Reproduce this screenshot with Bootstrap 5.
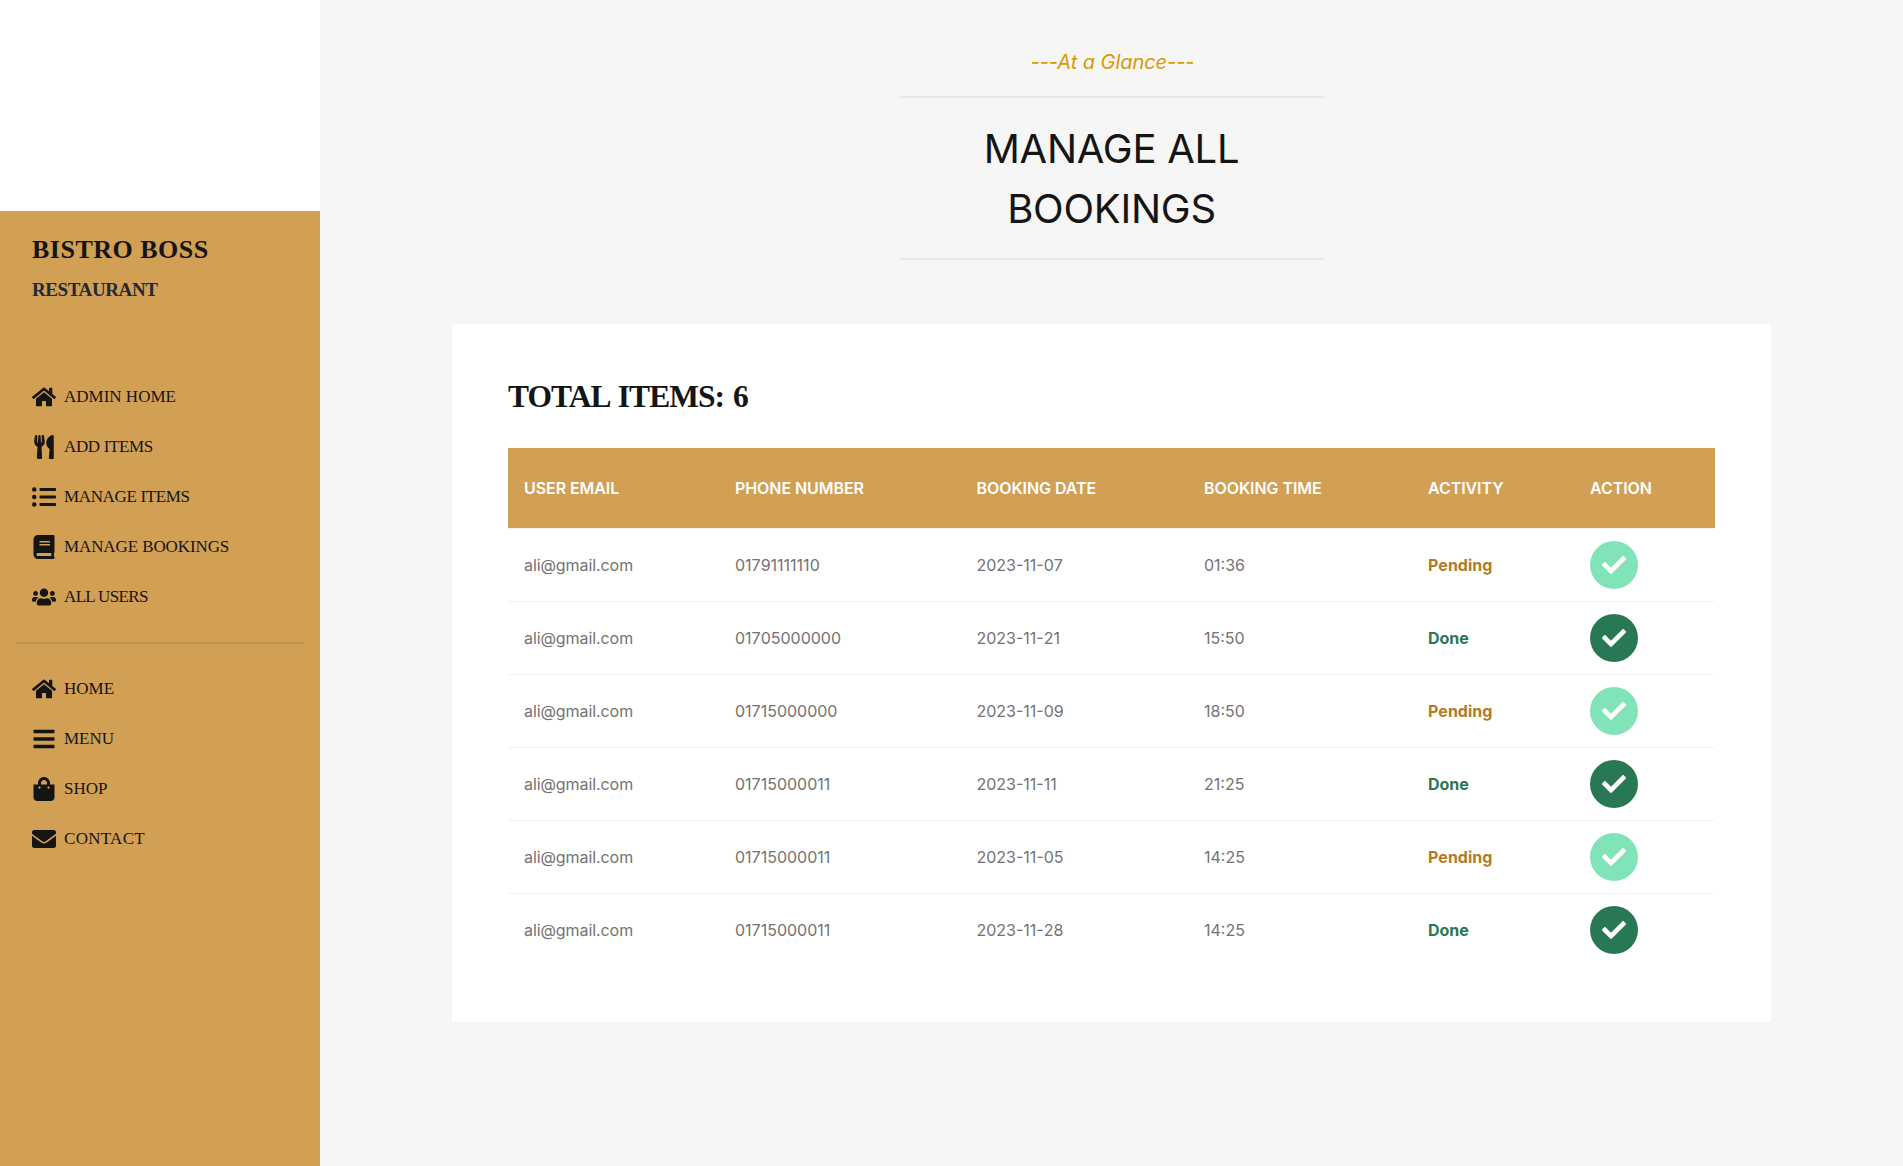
<!DOCTYPE html>
<html lang="en">
<head>
<meta charset="utf-8">
<meta name="viewport" content="width=device-width, initial-scale=1">
<title>Bistro Boss | Manage Bookings</title>
<link href="https://cdn.jsdelivr.net/npm/bootstrap@5.3.0/dist/css/bootstrap.min.css" rel="stylesheet">
<style>
body { font-family: Inter, "Noto Sans", sans-serif; color: #151515; line-height: 24px; }
.sidebar { width: 320px; padding-top: 211px; }
.side-panel { background: #d1a054; padding: 21px 16px 0; font-family: "Liberation Serif", serif; }
.brand-name { font-size: 26px; line-height: 36px; font-weight: 700; letter-spacing: .5px; }
.brand-sub { font-size: 19px; line-height: 28px; font-weight: 700; color: #1f2937; letter-spacing: -.4px; margin-top: 8px; }
.side-nav .nav-link { height: 50px; padding: 0 16px; color: #151515; font-size: 17px; }
.side-nav .nav-link svg { width: 24px; height: 24px; fill: currentColor; }
.side-nav.first { margin-top: 68px; }
.side-nav .loose { letter-spacing: .3px; }
.side-nav .snug { letter-spacing: -.1px; }
.side-nav .tight { letter-spacing: -.35px; }
.side-nav .tighter { letter-spacing: -.65px; }
.side-line { height: 2px; background: #be9352; margin: 20px 0; }
.main-area { background: #f6f6f6; }
.section-head { width: 424px; padding-top: 47px; }
.tagline { color: #d99904; font-size: 20px; line-height: 30px; font-style: italic; letter-spacing: -.06px; padding-left: 2px; margin-bottom: 19px; }
.main-title { font-size: 40px; line-height: 60px; font-weight: 400; letter-spacing: -.25px; border: solid #e5e7eb; border-width: 2px 0; padding: 21px 60px 19px; margin: 0; }
.panel { width: 1319px; margin-top: 64px; padding: 55px 56px 56px; }
.total { font-family: "Liberation Serif", serif; font-size: 31.5px; line-height: 36px; font-weight: 700; letter-spacing: -.95px; word-spacing: 2px; margin: 0 0 33px; }
.bookings { table-layout: fixed; border-collapse: separate; border-spacing: 0; color: #737373; margin: 0; --bs-table-bg: transparent; }
.bookings th, .bookings td { padding: 12px 16px; border-bottom: 1px solid #f2f2f2; vertical-align: middle; color: inherit; }
.bookings td { font-kerning: none; }
.bookings td:first-child { letter-spacing: -.08px; }
.bookings th { height: 81px; background: #d1a054; background-clip: padding-box; color: #fff; font-weight: 600; letter-spacing: -.07px; }
.bookings tbody tr:last-child td { border-bottom: 0; }
.bookings .status { font-weight: 700; }
.pending { color: #b07c2a; }
.finished { color: #287855; }
.round-btn { width: 48px; height: 48px; padding: 0; border: 0; background: #287855; }
.round-btn.open { background: #81e4b8; }
.round-btn svg { width: 24px; height: 24px; fill: #fff; }
</style>
</head>
<body>
<svg class="d-none" xmlns="http://www.w3.org/2000/svg">
<symbol id="i-home" viewBox="0 0 576 512"><path d="M280.37 148.26L96 300.11V464a16 16 0 0 0 16 16l112.06-.29a16 16 0 0 0 15.92-16V368a16 16 0 0 1 16-16h64a16 16 0 0 1 16 16v95.64a16 16 0 0 0 16 16.05L464 480a16 16 0 0 0 16-16V300L295.67 148.26a12.19 12.19 0 0 0-15.3 0zM571.6 251.47L488 182.56V44.05a12 12 0 0 0-12-12h-56a12 12 0 0 0-12 12v72.61L318.47 43a48 48 0 0 0-61 0L4.34 251.47a12 12 0 0 0-1.6 16.9l25.5 31A12 12 0 0 0 45.15 301l235.22-193.74a12.19 12.19 0 0 1 15.3 0L530.9 301a12 12 0 0 0 16.9-1.6l25.5-31a12 12 0 0 0-1.7-16.93z"/></symbol>
<symbol id="i-utensils" viewBox="0 0 416 512"><path d="M207.9 15.2c.8 4.7 16.1 94.5 16.1 128.8 0 52.3-27.8 89.6-68.9 104.6L168 486.7c.7 13.7-10.2 25.3-24 25.3H80c-13.7 0-24.7-11.5-24-25.3l12.9-238.1C27.7 233.6 0 196.2 0 144 0 109.6 15.3 19.9 16.1 15.2 19.3-5.1 61.4-5.4 64 16.3v141.2c1.3 3.4 15.1 3.2 16 0 1.4-25.3 7.9-139.2 8-141.8 3.3-20.8 44.7-20.8 47.9 0 .2 2.7 6.6 116.5 8 141.8.9 3.2 14.8 3.4 16 0V16.3c2.6-21.6 44.8-21.4 48-1.1zm119.2 285.7l-15 185.1c-1.2 14 9.9 26 23.9 26h56c13.3 0 24-10.7 24-24V24c0-13.2-10.7-24-24-24-82.5 0-221.4 178.5-64.9 300.9z"/></symbol>
<symbol id="i-list" viewBox="0 0 512 512"><path d="M48 48a48 48 0 1 0 48 48 48 48 0 0 0-48-48zm0 160a48 48 0 1 0 48 48 48 48 0 0 0-48-48zm0 160a48 48 0 1 0 48 48 48 48 0 0 0-48-48zm448 16H176a16 16 0 0 0-16 16v32a16 16 0 0 0 16 16h320a16 16 0 0 0 16-16v-32a16 16 0 0 0-16-16zm0-320H176a16 16 0 0 0-16 16v32a16 16 0 0 0 16 16h320a16 16 0 0 0 16-16V80a16 16 0 0 0-16-16zm0 160H176a16 16 0 0 0-16 16v32a16 16 0 0 0 16 16h320a16 16 0 0 0 16-16v-32a16 16 0 0 0-16-16z"/></symbol>
<symbol id="i-book" viewBox="0 0 448 512"><path d="M448 360V24c0-13.3-10.7-24-24-24H96C43 0 0 43 0 96v320c0 53 43 96 96 96h328c13.3 0 24-10.7 24-24v-16c0-7.5-3.5-14.3-8.9-18.7-4.2-15.4-4.2-59.3 0-74.7 5.4-4.3 8.9-11.1 8.9-18.6zM128 134c0-3.3 2.7-6 6-6h212c3.3 0 6 2.7 6 6v20c0 3.3-2.7 6-6 6H134c-3.3 0-6-2.7-6-6v-20zm0 64c0-3.3 2.7-6 6-6h212c3.3 0 6 2.7 6 6v20c0 3.3-2.7 6-6 6H134c-3.3 0-6-2.7-6-6v-20zm253.4 250H96c-17.7 0-32-14.3-32-32 0-17.6 14.4-32 32-32h285.4c-1.9 17.1-1.9 46.9 0 64z"/></symbol>
<symbol id="i-users" viewBox="0 0 640 512"><path d="M96 224c35.3 0 64-28.7 64-64s-28.7-64-64-64-64 28.7-64 64 28.7 64 64 64zm448 0c35.3 0 64-28.7 64-64s-28.7-64-64-64-64 28.7-64 64 28.7 64 64 64zm32 32h-64c-17.6 0-33.5 7.1-45.1 18.6 40.3 22.1 68.9 62 75.1 109.4h66c17.7 0 32-14.3 32-32v-32c0-35.3-28.7-64-64-64zm-256 0c61.9 0 112-50.1 112-112S381.9 32 320 32 208 82.1 208 144s50.1 112 112 112zm76.8 32h-8.3c-20.8 10-43.9 16-68.5 16s-47.6-6-68.5-16h-8.3C179.6 288 128 339.6 128 403.2V432c0 26.5 21.5 48 48 48h288c26.5 0 48-21.5 48-48v-28.8c0-63.6-51.6-115.2-115.2-115.2zm-223.7-13.4C161.5 263.1 145.6 256 128 256H64c-35.3 0-64 28.7-64 64v32c0 17.7 14.3 32 32 32h65.9c6.3-47.4 34.9-87.3 75.2-109.4z"/></symbol>
<symbol id="i-bars" viewBox="0 0 448 512"><rect y="60" width="448" height="72" rx="16"/><rect y="220" width="448" height="72" rx="16"/><rect y="380" width="448" height="72" rx="16"/></symbol>
<symbol id="i-bag" viewBox="0 0 448 512"><path d="M352 160v-32C352 57.42 294.579 0 224 0 153.42 0 96 57.42 96 128v32H0v272c0 44.183 35.817 80 80 80h288c44.183 0 80-35.817 80-80V160h-96zm-192-32c0-35.29 28.71-64 64-64s64 28.71 64 64v32H160v-32zm160 120c-13.255 0-24-10.745-24-24s10.745-24 24-24 24 10.745 24 24-10.745 24-24 24zm-192 0c-13.255 0-24-10.745-24-24s10.745-24 24-24 24 10.745 24 24-10.745 24-24 24z"/></symbol>
<symbol id="i-mail" viewBox="0 0 512 512"><path d="M502.3 190.8c3.9-3.1 9.7-.2 9.7 4.7V400c0 26.5-21.5 48-48 48H48c-26.5 0-48-21.5-48-48V195.6c0-5 5.7-7.8 9.7-4.7 22.4 17.4 52.1 39.5 154.1 113.6 21.1 15.4 56.7 47.8 92.2 47.6 35.7.3 72-32.8 92.3-47.6 102-74.1 131.6-96.3 154-113.7zM256 320c23.2.4 56.6-29.2 73.4-41.4 132.7-96.3 142.8-104.7 173.4-128.7 5.8-4.5 9.2-11.5 9.2-18.9v-19c0-26.5-21.5-48-48-48H48c-26.5 0-48 21.5-48 48v19c0 7.4 3.4 14.3 9.2 18.9 30.6 23.9 40.7 32.4 173.4 128.7 16.8 12.2 50.2 41.8 73.4 41.4z"/></symbol>
<symbol id="i-check" viewBox="0 0 512 512"><path d="M173.898 439.404l-166.4-166.4c-9.997-9.997-9.997-26.206 0-36.204l36.203-36.204c9.997-9.998 26.207-9.998 36.204 0L192 312.69 432.095 72.596c9.997-9.997 26.207-9.997 36.204 0l36.203 36.204c9.997 9.997 9.997 26.206 0 36.204l-294.4 294.401c-9.998 9.997-26.207 9.997-36.204-.001z"/></symbol>
</svg>
<div class="d-flex vh-100 overflow-hidden">
  <aside class="sidebar bg-white d-flex flex-column flex-shrink-0">
    <div class="side-panel flex-grow-1">
      <div class="px-3">
        <div class="brand-name">BISTRO BOSS</div>
        <div class="brand-sub">RESTAURANT</div>
      </div>
      <nav class="nav flex-column side-nav first">
        <a class="nav-link d-flex align-items-center gap-2" href="#"><svg><use href="#i-home"/></svg><span>ADMIN HOME</span></a>
        <a class="nav-link d-flex align-items-center gap-2" href="#"><svg><use href="#i-utensils"/></svg><span class="tight">ADD ITEMS</span></a>
        <a class="nav-link d-flex align-items-center gap-2" href="#"><svg><use href="#i-list"/></svg><span class="tight">MANAGE ITEMS</span></a>
        <a class="nav-link d-flex align-items-center gap-2" href="#"><svg><use href="#i-book"/></svg><span class="snug">MANAGE BOOKINGS</span></a>
        <a class="nav-link d-flex align-items-center gap-2" href="#"><svg><use href="#i-users"/></svg><span class="tighter">ALL USERS</span></a>
      </nav>
      <div class="side-line"></div>
      <nav class="nav flex-column side-nav">
        <a class="nav-link d-flex align-items-center gap-2" href="#"><svg><use href="#i-home"/></svg><span>HOME</span></a>
        <a class="nav-link d-flex align-items-center gap-2" href="#"><svg><use href="#i-bars"/></svg><span>MENU</span></a>
        <a class="nav-link d-flex align-items-center gap-2" href="#"><svg><use href="#i-bag"/></svg><span>SHOP</span></a>
        <a class="nav-link d-flex align-items-center gap-2" href="#"><svg><use href="#i-mail"/></svg><span class="loose">CONTACT</span></a>
      </nav>
    </div>
  </aside>
  <main class="main-area flex-grow-1">
    <header class="section-head mx-auto text-center">
      <p class="tagline">---At a Glance---</p>
      <h1 class="main-title">MANAGE ALL BOOKINGS</h1>
    </header>
    <section class="panel bg-white mx-auto">
      <h2 class="total">TOTAL ITEMS: 6</h2>
      <table class="table bookings">
        <colgroup><col style="width:211px"><col style="width:241.5px"><col style="width:227.5px"><col style="width:224px"><col style="width:162px"><col></colgroup>
        <thead><tr><th>USER EMAIL</th><th>PHONE NUMBER</th><th>BOOKING DATE</th><th>BOOKING TIME</th><th>ACTIVITY</th><th>ACTION</th></tr></thead>
        <tbody>
          <tr><td>ali@gmail.com</td><td>01791111110</td><td>2023-11-07</td><td>01:36</td><td class="status"><span class="pending">Pending</span></td><td><button class="btn round-btn open rounded-circle d-flex align-items-center justify-content-center"><svg><use href="#i-check"/></svg></button></td></tr>
          <tr><td>ali@gmail.com</td><td>01705000000</td><td>2023-11-21</td><td>15:50</td><td class="status"><span class="finished">Done</span></td><td><button class="btn round-btn rounded-circle d-flex align-items-center justify-content-center"><svg><use href="#i-check"/></svg></button></td></tr>
          <tr><td>ali@gmail.com</td><td>01715000000</td><td>2023-11-09</td><td>18:50</td><td class="status"><span class="pending">Pending</span></td><td><button class="btn round-btn open rounded-circle d-flex align-items-center justify-content-center"><svg><use href="#i-check"/></svg></button></td></tr>
          <tr><td>ali@gmail.com</td><td>01715000011</td><td>2023-11-11</td><td>21:25</td><td class="status"><span class="finished">Done</span></td><td><button class="btn round-btn rounded-circle d-flex align-items-center justify-content-center"><svg><use href="#i-check"/></svg></button></td></tr>
          <tr><td>ali@gmail.com</td><td>01715000011</td><td>2023-11-05</td><td>14:25</td><td class="status"><span class="pending">Pending</span></td><td><button class="btn round-btn open rounded-circle d-flex align-items-center justify-content-center"><svg><use href="#i-check"/></svg></button></td></tr>
          <tr><td>ali@gmail.com</td><td>01715000011</td><td>2023-11-28</td><td>14:25</td><td class="status"><span class="finished">Done</span></td><td><button class="btn round-btn rounded-circle d-flex align-items-center justify-content-center"><svg><use href="#i-check"/></svg></button></td></tr>
        </tbody>
      </table>
    </section>
  </main>
</div>
<script src="https://cdn.jsdelivr.net/npm/bootstrap@5.3.0/dist/js/bootstrap.bundle.min.js"></script>
</body>
</html>
